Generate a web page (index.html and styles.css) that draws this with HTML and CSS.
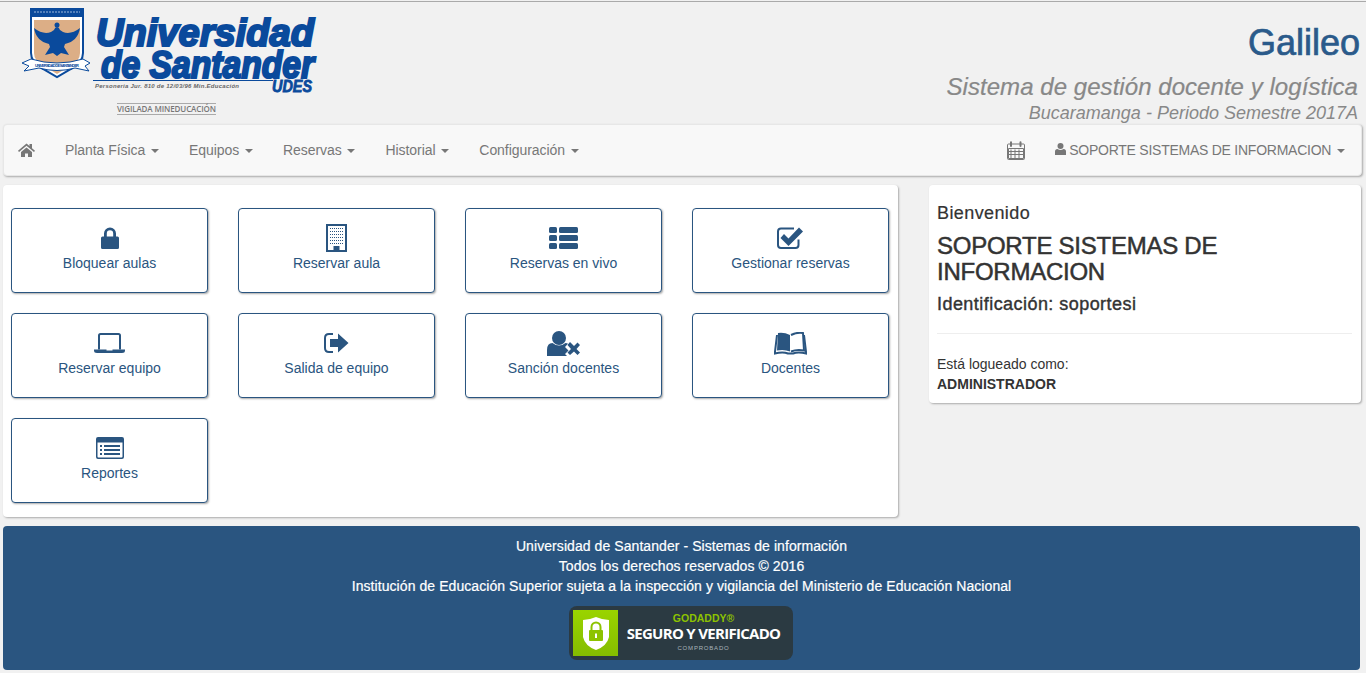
FILE: index.html
```html
<!DOCTYPE html>
<html lang="es">
<head>
    <meta charset="UTF-8">
    <meta name="viewport" content="width=device-width, initial-scale=1.0">
    <title>Galileo - Universidad de Santander</title>
    <link rel="stylesheet" href="styles.css">
</head>
<body>
    <header class="top">
        <svg class="logo" width="345" height="118" viewBox="0 0 345 118">
            <!-- escudo -->
            <path d="M10 6H62V50Q62 60 50 66L36 74L22 66Q10 60 10 50Z" fill="#fff" stroke="#0a4a9c" stroke-width="2"/>
            <rect x="10" y="6" width="52" height="8" fill="#0a4a9c"/>
            <path d="M13 9H59" stroke="#9db8dc" stroke-dasharray="2 1"/>
            <path d="M13 17H59V50Q59 58 49 63L36 71L23 63Q13 58 13 50Z" fill="#dcae86"/>
            <circle cx="36" cy="22" r="2.500" fill="#0a4a9c"/>
            <path d="M13 25Q22 32 30 29L33 27Q34 24 36 24Q38 24 39 27L42 29Q50 32 59 25Q57 38 44 41L43 44L48 52L40 50L36 53L32 50L24 52L29 44L28 41Q15 38 13 25Z" fill="#0a4a9c"/>
            <path d="M1 60L10 56Q36 64 62 56L69 60L64 63L68 68L54 65Q36 70 18 65L3 68L8 63Z" fill="#fff" stroke="#0a4a9c"/>
            <text class="logo-mini" x="14" y="63.500" textLength="44">UNIVERSIDAD DE SANTANDER</text>
            <text class="logo-big" x="75" y="43" textLength="218" lengthAdjust="spacingAndGlyphs">Universidad</text>
            <text class="logo-big" x="80" y="75" textLength="213" lengthAdjust="spacingAndGlyphs">de Santander</text>
            <rect x="72" y="77" width="180" height="1" fill="#0a4a9c"/>
            <text class="logo-small" x="74" y="85" textLength="144">Personeria Jur. 810 de 12/03/96 Min.Educación</text>
            <text class="logo-udes" x="251" y="89" textLength="40" lengthAdjust="spacingAndGlyphs">UDES</text>
            <rect x="96" y="100" width="99" height="1" fill="#aaa"/>
            <text class="logo-vig" x="96" y="109" textLength="99">VIGILADA MINEDUCACIÓN</text>
            <rect x="96" y="111" width="99" height="1" fill="#aaa"/>
        </svg>
        <div class="brand">
            <h1>Galileo</h1>
            <p class="brand-sub">Sistema de gestión docente y logística</p>
            <p class="brand-place">Bucaramanga - Periodo Semestre 2017A</p>
        </div>
    </header>

    <nav class="navbar">
        <a class="nav-home" href="#">
            <svg width="17" height="14" viewBox="0 0 17 14"><path d="M8.500 0.500L11.500 3V1H14V5.200L17 7.800L16 9L8.500 2.800L1 9L0 7.800Z M3 9L8.500 4.400L14 9V14H10V10.500H7V14H3Z" fill="#777"/></svg>
        </a>
        <a href="#">Planta Física <i class="caret"></i></a>
        <a href="#">Equipos <i class="caret"></i></a>
        <a href="#">Reservas <i class="caret"></i></a>
        <a href="#">Historial <i class="caret"></i></a>
        <a href="#">Configuración <i class="caret"></i></a>
        <span class="nav-space"></span>
        <a class="nav-cal" href="#">
            <svg width="18" height="19" viewBox="0 0 18 19"><path d="M1.500 3H16.500Q17.500 3 17.500 4V17.500Q17.500 18.500 16.500 18.500H1.500Q0.500 18.500 0.500 17.500V4Q0.500 3 1.500 3Z M1.500 7.500V17.500H16.500V7.500Z M4 8.500V17M8 8.500V17M12 8.500V17 M2 10.500H16M2 13.500H16" fill="none" stroke="#777"/><path d="M4 1.200V5M13.500 1.200V5" stroke="#777" stroke-width="2" stroke-linecap="round"/></svg>
        </a>
        <a class="nav-user" href="#">
            <svg width="11" height="12" viewBox="0 0 11 12"><circle cx="5.500" cy="3" r="3" fill="#777"/><path d="M0 12V8.500Q0 6 2.500 6Q5.500 8 8.500 6Q11 6 11 8.500V12Z" fill="#777"/></svg>
            <span class="nav-name">SOPORTE SISTEMAS DE INFORMACION</span> <i class="caret"></i>
        </a>
    </nav>

    <div class="content">
        <main class="panel tiles">
            <a class="tile" href="#">
                <span class="tile-icon"><svg width="18" height="22" viewBox="0 0 18 22"><path d="M3 10V6.500a6 6 0 0 1 12 0V10h-2.800V6.500a3.200 3.200 0 0 0-6.400 0V10Z M1.500 9.500H16.500Q18 9.500 18 11V20.500Q18 22 16.500 22H1.500Q0 22 0 20.500V11Q0 9.500 1.500 9.500Z"/></svg></span>
                Bloquear aulas
            </a>
            <a class="tile" href="#">
                <span class="tile-icon"><svg width="21" height="28" viewBox="0 0 21 28"><path fill-rule="evenodd" d="M0 0H21V28H0Z M2 2V26H7.500V22H13.500V26H19V2Z"/><path class="dots" d="M4 4.500H17M4 7.500H17M4 10.500H17M4 13.500H17M4 16.500H17M4 19.500H17"/></svg></span>
                Reservar aula
            </a>
            <a class="tile" href="#">
                <span class="tile-icon"><svg width="29" height="22" viewBox="0 0 29 22"><rect width="8" height="6" rx="1.500"/><rect x="10" width="19" height="6" rx="1.500"/><rect y="8" width="8" height="6" rx="1.500"/><rect x="10" y="8" width="19" height="6" rx="1.500"/><rect y="16" width="8" height="6" rx="1.500"/><rect x="10" y="16" width="19" height="6" rx="1.500"/></svg></span>
                Reservas en vivo
            </a>
            <a class="tile" href="#">
                <span class="tile-icon"><svg width="27" height="22" viewBox="0 0 27 22"><path class="line" d="M21.500 12.500V18Q21.500 21 18.500 21H4Q1 21 1 18V4.500Q1 1.500 4 1.500H17"/><path d="M7 8L11.500 12.500L22 1.500L26 5.500L11.500 20L3.500 12Z" transform="translate(0 -1)"/></svg></span>
                Gestionar reservas
            </a>
            <a class="tile" href="#">
                <span class="tile-icon"><svg width="31" height="20" viewBox="0 0 31 20"><path class="line" d="M5 16.500V2.500Q5 1 6.500 1H24.500Q26 1 26 2.500V16.500"/><path d="M0 16.500H12.500V17.500H18.500V16.500H31V17.500Q31 20 28 20H3Q0 20 0 17.500Z"/></svg></span>
                Reservar equipo
            </a>
            <a class="tile" href="#">
                <span class="tile-icon"><svg width="25" height="20" viewBox="0 0 25 20"><path class="line" d="M9 1H5Q1 1 1 5V15Q1 19 5 19H9"/><path d="M6 6H14V0.500L24.500 10L14 19.500V14H6Z"/></svg></span>
                Salida de equipo
            </a>
            <a class="tile" href="#">
                <span class="tile-icon"><svg width="33" height="25" viewBox="0 0 33 25"><circle cx="12" cy="7" r="7"/><path d="M0 25V19Q0 12 5.500 12Q12 17 18.500 12Q20 12 21 12.700L18 16L21.500 19.500L18 23L20 25Z"/><path d="M23 11L27 15L30.500 11.500L33 14L29.500 18L33 21.500L30.500 24L27 20.500L23 24L20.500 21.500L24 18L20.500 14Z"/></svg></span>
                Sanción docentes
            </a>
            <a class="tile" href="#">
                <span class="tile-icon"><svg width="33" height="23" viewBox="0 0 33 23"><path d="M4 1Q10 0 16 3V19.500Q10 17 3 18.500Z"/><path class="line" d="M17 3Q23 0 29 1L30 18.500Q23 17 17 19.500"/><path class="line" d="M3 3L0.800 21.500Q9 19.500 14 21.500H19Q24 19.500 32.200 21.500L30 3"/></svg></span>
                Docentes
            </a>
            <a class="tile" href="#">
                <span class="tile-icon"><svg width="28" height="22" viewBox="0 0 28 22"><path fill-rule="evenodd" d="M2 0H26Q28 0 28 2V20Q28 22 26 22H2Q0 22 0 20V2Q0 0 2 0Z M1.500 5.500V19.500Q1.500 20.500 2.500 20.500H25.500Q26.500 20.500 26.500 19.500V5.500Z"/><path d="M4 8H6V10H4ZM8 8H24V10H8ZM4 12H6V14H4ZM8 12H24V14H8ZM4 16H6V18H4ZM8 16H24V18H8Z"/></svg></span>
                Reportes
            </a>
        </main>

        <aside class="panel welcome">
            <p class="welcome-hi">Bienvenido</p>
            <h2>SOPORTE SISTEMAS DE INFORMACION</h2>
            <h3>Identificación: soportesi</h3>
            <hr>
            <p class="welcome-role">Está logueado como:<br><b>ADMINISTRADOR</b></p>
        </aside>
    </div>

    <footer class="foot">
        <p>Universidad de Santander - Sistemas de información</p>
        <p>Todos los derechos reservados © 2016</p>
        <p>Institución de Educación Superior sujeta a la inspección y vigilancia del Ministerio de Educación Nacional</p>
        <div class="seal">
            <div class="seal-box">
                <svg width="26" height="33" viewBox="0 0 26 33"><path d="M13 0Q20 3 26 3V20Q24 29 13 33Q2 29 0 20V3Q6 3 13 0Z" fill="#fff"/><path d="M8.500 14V10a4.500 4.500 0 0 1 9 0V14" fill="none" stroke="#8dc300" stroke-width="2"/><rect x="6" y="13" width="14" height="11" rx="1" fill="#8dc300"/><rect x="12" y="16.500" width="2" height="4.500" fill="#fff"/></svg>
            </div>
            <div class="seal-text">
                <span class="seal-a">GODADDY®</span>
                <span class="seal-b">SEGURO Y VERIFICADO</span>
                <span class="seal-c">COMPROBADO</span>
            </div>
        </div>
    </footer>
</body>
</html>
```

FILE: styles.css
```css
* {
    box-sizing: border-box;
}
html, body {
    height: 673px;
    overflow: hidden;
}
body {
    margin: 0;
    padding: 1px 0 0;
    background-color: #f1f1f1;
    font-family: "Liberation Sans", Arial, sans-serif;
    font-size: 14px;
    color: #333;
}
a {
    text-decoration: none;
}

/* cabecera */
.top {
    display: flex;
    justify-content: space-between;
    height: 123px;
    border-top: 1px solid #aaa;
    padding: 0 6px 0 21px;
}
.logo {
    display: block;
    flex: none;
    margin-top: 1px;
}
.logo-big {
    font: italic bold 39px "Liberation Sans", Arial, sans-serif;
    fill: #0a4a9c;
    stroke: #0a4a9c;
    stroke-width: 2.2px;
}
.logo-mini {
    font: bold 4px "Liberation Sans", Arial, sans-serif;
    fill: #0a4a9c;
}
.logo-small {
    font: italic bold 6px "Liberation Sans", Arial, sans-serif;
    fill: #666;
}
.logo-udes {
    font: italic bold 16px "Liberation Sans", Arial, sans-serif;
    fill: #0a4a9c;
    stroke: #0a4a9c;
    stroke-width: 0.8px;
}
.logo-vig {
    font: 600 8px "Open Sans", Arial, sans-serif;
    fill: #777;
}
.brand {
    text-align: right;
}
.brand h1 {
    margin: 21px 0 0;
    font-size: 36px;
    font-weight: normal;
    line-height: 40px;
    color: #2a5a8a;
    -webkit-text-stroke: 0.7px #2a5a8a;
}
.brand p {
    margin: 0;
    padding-right: 2px;
    font-style: italic;
    color: #888;
}
.brand-sub {
    padding-top: 9px;
    font-size: 24px;
    line-height: 30px;
    letter-spacing: 0.05px;
    -webkit-text-stroke: 0.2px #888;
}
.brand-place {
    font-size: 18px;
    line-height: 22px;
}

/* barra de navegacion */
.navbar {
    display: flex;
    align-items: center;
    height: 52px;
    margin: 0 4px 0 3px;
    background-color: #f8f8f8;
    border: 1px solid #e7e7e7;
    border-radius: 4px;
    box-shadow: 1px 1px 2px #aaa;
}
.navbar a {
    padding: 0 15px;
    color: #777;
    letter-spacing: -0.06px;
    white-space: nowrap;
}
.navbar .nav-home {
    padding: 0 15px 0 14px;
}
.navbar .nav-user {
    padding-right: 16px;
}
.nav-home svg, .nav-cal svg {
    display: block;
}
.nav-space {
    flex: 1;
}
.nav-name {
    margin-left: -1px;
    letter-spacing: -0.25px;
}
.caret {
    display: inline-block;
    width: 0;
    height: 0;
    margin-left: 2px;
    vertical-align: middle;
    border-top: 4px solid #777;
    border-left: 4px solid transparent;
    border-right: 4px solid transparent;
}

/* paneles */
.content {
    display: flex;
    align-items: flex-start;
    margin: 9px 5px 0 3px;
    gap: 31px;
}
.panel {
    background-color: #fff;
    border-radius: 4px;
    box-shadow: 1px 1px 2px #aaa;
}
.tiles {
    display: grid;
    grid-template-columns: repeat(4, 197px);
    grid-auto-rows: 85px;
    gap: 20px 30px;
    width: 895px;
    height: 332px;
    padding: 23px 8px 14px;
}
.tile {
    display: flex;
    flex-direction: column;
    align-items: center;
    padding-top: 15px;
    line-height: 20px;
    background-color: #fff;
    border: 1px solid #2a5580;
    border-radius: 4px;
    box-shadow: 1px 1px 2px #aaa;
    color: #2a5580;
}
.tile-icon {
    display: flex;
    align-items: center;
    justify-content: center;
    height: 28px;
    margin-bottom: 1px;
}
.tile svg {
    display: block;
    fill: #2a5580;
}
.tile svg .line {
    fill: none;
    stroke: #2a5580;
    stroke-width: 2;
}
.tile svg .dots {
    fill: none;
    stroke: #2a5580;
    stroke-width: 1;
    stroke-dasharray: 1 1;
}
.welcome {
    width: 432px;
    height: 218px;
    padding: 18px 9px 0 8px;
}
.welcome-hi {
    margin: 0;
    font-size: 18px;
    line-height: 20px;
    letter-spacing: 0.4px;
    -webkit-text-stroke: 0.2px #333;
}
.welcome h2 {
    margin: 10px 0 0;
    font-size: 24px;
    font-weight: normal;
    line-height: 26px;
    letter-spacing: -0.25px;
    -webkit-text-stroke: 0.5px #333;
}
.welcome h3 {
    margin: 9px 0 0;
    font-size: 18px;
    font-weight: normal;
    line-height: 20px;
    letter-spacing: 0.45px;
    -webkit-text-stroke: 0.4px #333;
}
.welcome hr {
    margin: 19px 0 20px;
    border: 0;
    border-top: 1px solid #eee;
}
.welcome-role {
    margin: 0;
    line-height: 20px;
}

/* pie */
.foot {
    width: 1357px;
    height: 144px;
    margin: 9px 0 0 3px;
    padding-top: 10px;
    background-color: #2a5580;
    border-radius: 4px;
    color: #fff;
    text-align: center;
}
.foot p {
    margin: 0;
    line-height: 20px;
    letter-spacing: 0.07px;
    -webkit-text-stroke: 0.2px #fff;
}
.seal {
    display: flex;
    align-items: center;
    width: 224px;
    height: 54px;
    margin: 10px 0 0 566px;
    padding: 4px;
    background-color: #2b3a42;
    border-radius: 8px;
}
.seal-box {
    display: flex;
    flex: none;
    align-items: center;
    justify-content: center;
    width: 45px;
    height: 46px;
    background: linear-gradient(#9ad400, #85bd00);
}
.seal-text {
    display: flex;
    flex: 1;
    flex-direction: column;
    align-items: center;
}
.seal-a {
    font-size: 10.5px;
    font-weight: bold;
    line-height: 11px;
    color: #8dc300;
}
.seal-b {
    font-family: "Open Sans", Arial, sans-serif;
    font-size: 15px;
    font-weight: bold;
    line-height: 19px;
    letter-spacing: -0.7px;
}
.seal-c {
    font-size: 6px;
    line-height: 10px;
    letter-spacing: 0.8px;
    color: #a9b4ba;
}
```
